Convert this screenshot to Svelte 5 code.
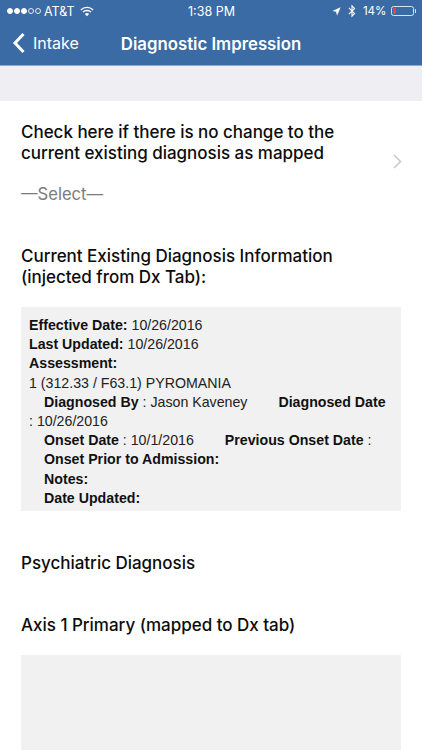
<script>
  const summary = [
    { label: 'Effective Date:', value: ' 10/26/2016' },
    { label: 'Last Updated:', value: ' 10/26/2016' },
    { label: 'Assessment:', value: '' }
  ];
</script>

<main>
  <header class="top">
    <div class="status">
      <div class="carrier">
        <span class="dots">
          <i class="on"></i><i class="on"></i><i class="on"></i><i></i><i></i>
        </span>
        <span>AT&amp;T</span>
        <svg class="wifi" viewBox="0 0 16 12" width="14" height="11">
          <path d="M1 4.200a10 10 0 0 1 14 0" fill="none" stroke="#fff" stroke-width="1.500" />
          <path d="M3.400 6.700a6.600 6.600 0 0 1 9.200 0" fill="none" stroke="#fff" stroke-width="1.500" />
          <path d="M5.600 8.900a3.400 3.400 0 0 1 4.800 0L8 11.400z" fill="#fff" />
        </svg>
      </div>
      <div class="clock">1:38 PM</div>
      <div class="right">
        <svg viewBox="0 0 10 10" width="9" height="9">
          <path d="M9.600.4 5.600 9.600 4.600 5.400.4 4.400z" fill="#fff" />
        </svg>
        <svg class="bt" viewBox="0 0 9 15" width="8" height="14">
          <path d="M1 4l6.400 6.400L4.500 13.400V1.600L7.400 4.600 1 11" fill="none" stroke="#fff" stroke-width="1.200" />
        </svg>
        <span class="pct">14%</span>
        <div class="battery"><div class="charge"></div></div>
        <div class="nub"></div>
      </div>
    </div>
    <nav class="bar">
      <div class="back">
        <svg viewBox="0 0 14 22" width="14" height="22">
          <path d="M11.500 2 3 11l8.500 9" fill="none" stroke="#fff" stroke-width="3" />
        </svg>
        <span>Intake</span>
      </div>
      <div class="title">Diagnostic Impression</div>
    </nav>
  </header>

  <div class="band"></div>

  <section class="content">
    <div class="picker">
      <div class="picker-text">
        <h2>Check here if there is no change to the current existing diagnosis as mapped</h2>
        <div class="select">—Select—</div>
      </div>
      <svg class="chev" viewBox="0 0 9 15" width="9" height="15">
        <path d="M1 1l6.500 6.500L1 14" fill="none" stroke="#c7c7cc" stroke-width="1.500" />
      </svg>
    </div>

    <h2 class="current">Current Existing Diagnosis Information<br />(injected from Dx Tab):</h2>

    <div class="report">
      {#each summary as row}
        <div><b>{row.label}</b>{row.value}</div>
      {/each}
      <div>1 (312.33 / F63.1) PYROMANIA</div>
      <div class="wrap"><b>Diagnosed By</b> : Jason Kaveney <span class="gap"></span><b>Diagnosed Date</b><br />: 10/26/2016</div>
      <div class="in"><b>Onset Date</b> : 10/1/2016 <span class="gap"></span><b>Previous Onset Date</b> :</div>
      <div class="in"><b>Onset Prior to Admission:</b></div>
      <div class="in"><b>Notes:</b></div>
      <div class="in"><b>Date Updated:</b></div>
      <div class="in"><b>Code</b> : Jason Kaveney <span class="gap"></span><b>Date</b></div>
    </div>

    <h2 class="psych">Psychiatric Diagnosis</h2>
    <h2 class="axis">Axis 1 Primary (mapped to Dx tab)</h2>
    <div class="empty"></div>
  </section>
</main>

<style>
  :global(body) {
    margin: 0;
    background: #fff;
  }

  main {
    height: 750px;
    overflow: hidden;
    font-family: Inter, "Noto Sans", sans-serif;
    color: #111;
  }

  .top {
    background: #3b6ba4;
    color: #fff;
    height: 65px;
    border-bottom: 1px solid #8fa8cc;
  }

  .status {
    height: 22px;
    padding: 0 6px 0 7px;
    display: grid;
    grid-template-columns: 1fr auto 1fr;
    align-items: center;
    font-size: 12.500px;
  }

  .carrier {
    display: flex;
    align-items: center;
    gap: 3px;
  }

  .dots {
    display: flex;
    gap: 1px;
  }

  .dots i {
    width: 6px;
    height: 6px;
    border-radius: 50%;
    border: 0.7px solid #e4ebf4;
    box-sizing: border-box;
  }

  .dots i.on {
    background: #fff;
    border-color: #fff;
  }

  .wifi {
    margin-left: 2px;
  }

  .clock {
    font-size: 12.500px;
  }

  .right {
    display: flex;
    align-items: center;
    justify-content: flex-end;
    gap: 4px;
  }

  .bt {
    margin: 0 3px;
  }

  .pct {
    font-size: 11.600px;
  }

  .battery {
    width: 23px;
    height: 10px;
    border: 1px solid #d9e2ee;
    border-radius: 2.500px;
    padding: 1px;
    box-sizing: border-box;
  }

  .charge {
    width: 3.500px;
    height: 100%;
    background: #e0483e;
  }

  .nub {
    width: 1.500px;
    height: 4px;
    background: #d9e2ee;
    margin-left: -3px;
  }

  .bar {
    height: 43px;
    position: relative;
    display: flex;
    align-items: center;
    justify-content: center;
  }

  .back {
    position: absolute;
    left: 12px;
    top: 10px;
    display: flex;
    align-items: center;
    gap: 7px;
    font-size: 16px;
  }

  .title {
    font-size: 16.800px;
    font-weight: 600;
  }

  .band {
    height: 35px;
    background: #eeeef3;
  }

  .content {
    padding: 21px 21px 0;
  }

  .picker {
    display: flex;
    align-items: center;
    justify-content: space-between;
  }

  .picker-text {
    width: 345px;
  }

  h2 {
    margin: 0;
    font-size: 17px;
    font-weight: 500;
    line-height: 20.500px;
    letter-spacing: -0.02px;
    color: #0c0c0c;
  }

  .select {
    margin-top: 21px;
    font-size: 16.600px;
    line-height: 20px;
    color: #7b7b7b;
  }

  .chev {
    margin-top: -4px;
    margin-right: -1px;
  }

  .current {
    margin-top: 42px;
  }

  .report {
    margin-top: 20px;
    height: 204px;
    overflow: hidden;
    box-sizing: border-box;
    padding: 9px 8px 0;
    background: #f1f1f1;
    font-family: "Liberation Sans", Arial, sans-serif;
    font-size: 14.200px;
    line-height: 19.200px;
    color: #222;
  }

  .report b {
    color: #111;
  }

  .wrap {
    text-indent: 15px;
  }

  .in {
    padding-left: 15px;
    white-space: nowrap;
  }

  .gap {
    display: inline-block;
    width: 27px;
  }

  .psych {
    margin-top: 42px;
  }

  .axis {
    margin-top: 41px;
  }

  .empty {
    margin-top: 20px;
    height: 120px;
    background: #f1f1f1;
  }
</style>
